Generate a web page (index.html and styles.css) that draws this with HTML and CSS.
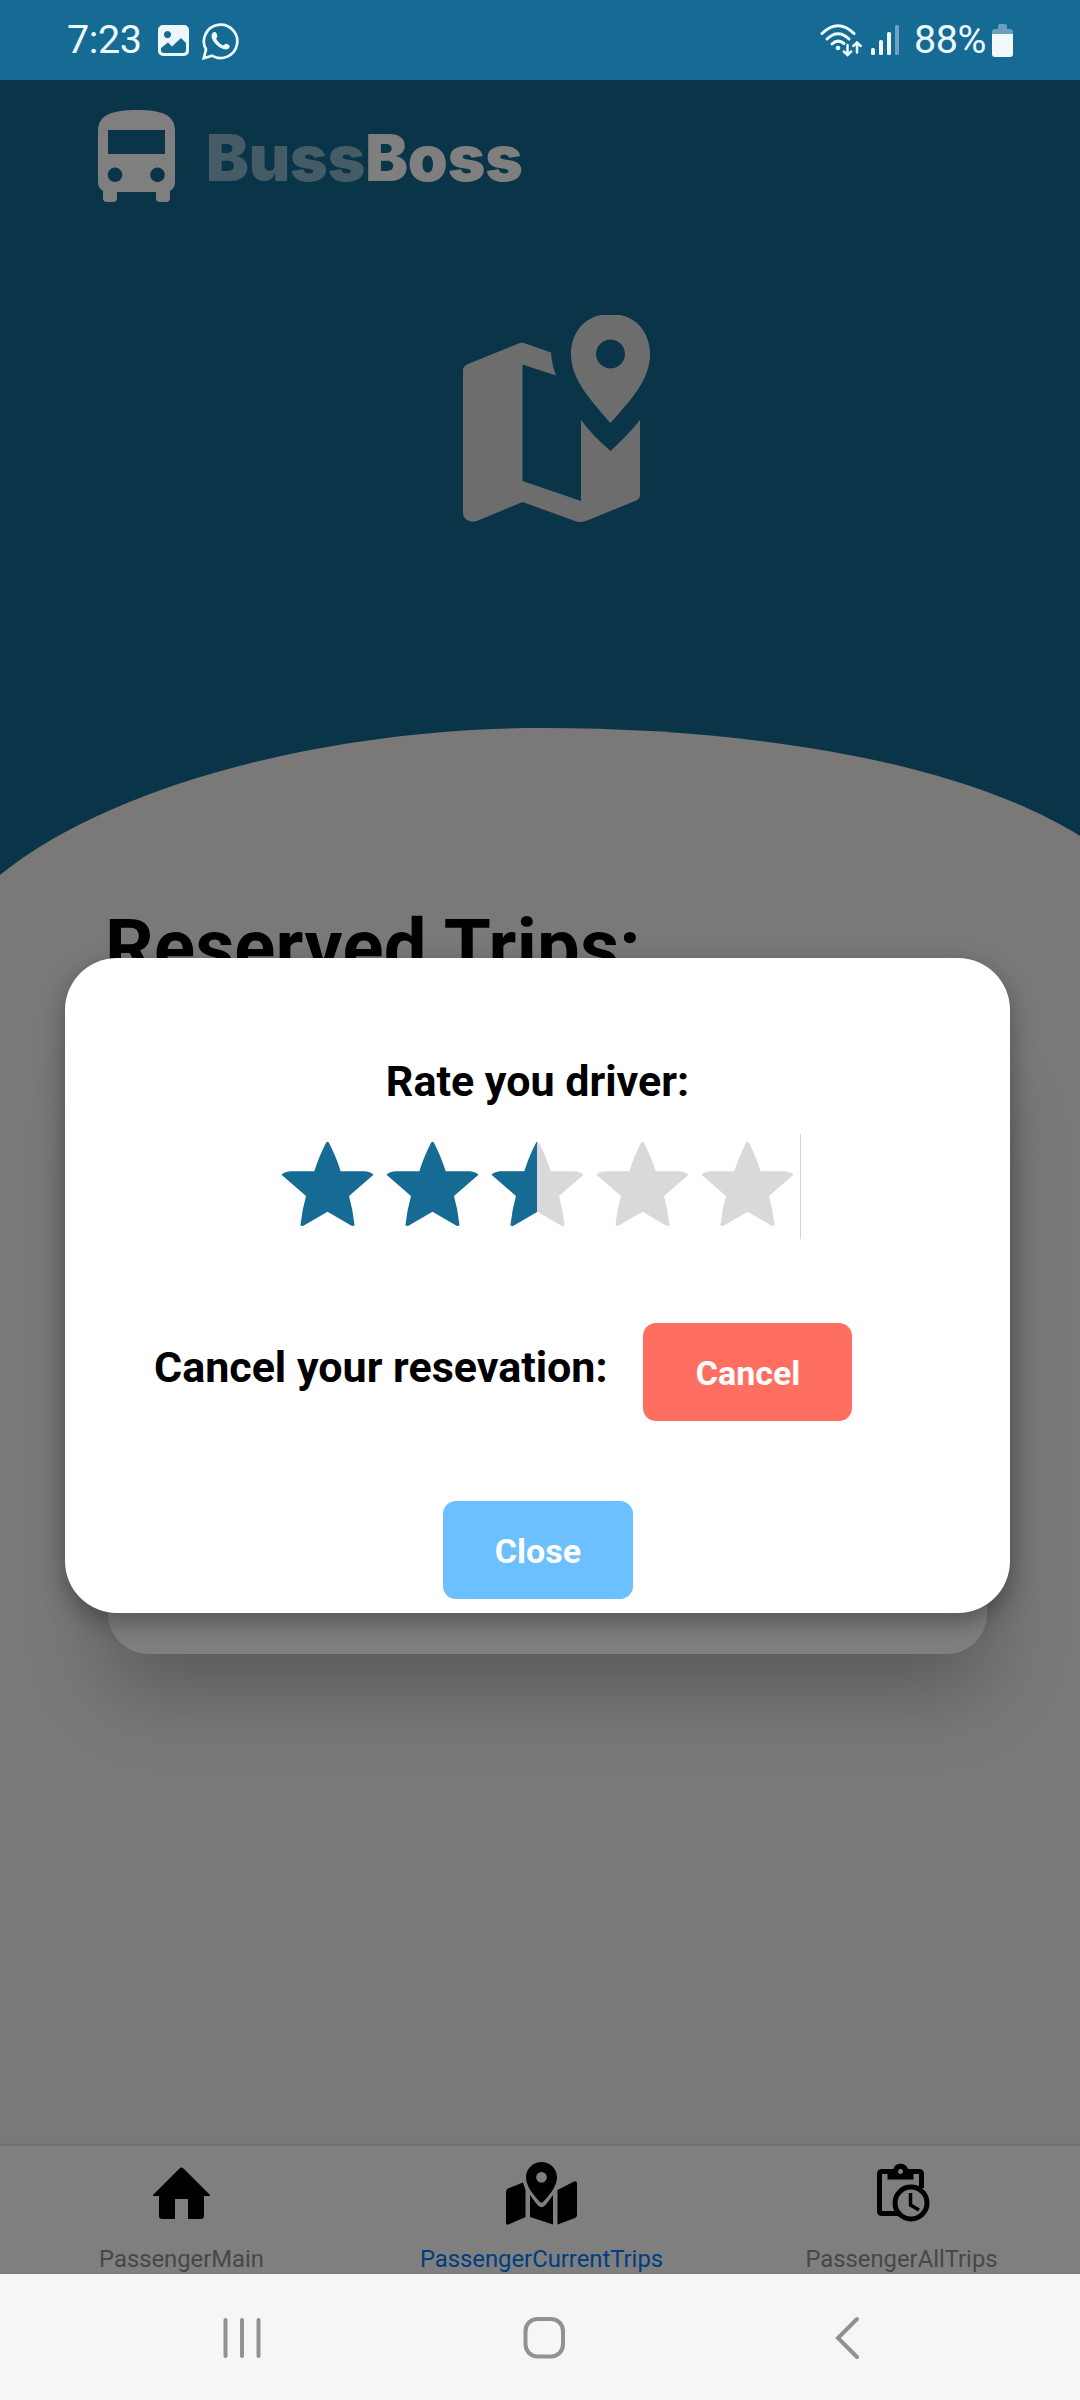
FILE: index.html
```html
<!DOCTYPE html>
<html lang="en">
<head>
<meta charset="utf-8">
<title>BussBoss</title>
<link rel="stylesheet" href="styles.css">
</head>
<body>
<div class="phone">
  <header class="status">
    <span class="status-time">7:23</span>
    <svg class="status-image" width="31" height="31" viewBox="0 0 31 31">
      <path fill="#edf6fa" fill-rule="evenodd" d="M5 0H26a5 5 0 0 1 5 5V26a5 5 0 0 1-5 5H5a5 5 0 0 1-5-5V5a5 5 0 0 1 5-5ZM9.500 6a3.600 3.600 0 1 0 .01 0ZM3 23V25a3 3 0 0 0 3 3H25a3 3 0 0 0 3-3V18L23 13L14 21.500L10 17.500Z"/>
    </svg>
    <svg class="status-chat" width="37" height="38" viewBox="0 0 37 38">
      <path fill="none" stroke="#edf9ff" stroke-width="2.700" d="M1.800 36.200L4 27.500A16.700 16.700 0 1 1 10 33.700Z"/>
      <path fill="#edf9ff" d="M10.500 11C12 9.500 14 9.800 14.500 11.500L15.300 14C15.500 15.500 14 16 14.300 17C16 20 18 22 21 23.300C22 23.500 23 21.500 24.500 21.800L27 23C28.500 24 27.500 26 26 27C20 29.500 9 20 9.500 13.500Z"/>
    </svg>
    <span class="status-gap"></span>
    <svg class="status-wifi" width="42" height="34" viewBox="0 0 42 34">
      <g fill="none" stroke="#edf9ff" stroke-width="3" stroke-linecap="round">
        <path d="M2 10.500Q18 -5 34 10.500"/>
        <path d="M7 16Q18 5.500 29 16"/>
        <path d="M12 21Q18 15.500 24 20.500"/>
        <path d="M27.500 22V31.500M23.800 28.500L27.500 32L31.200 28.500M37 29.500V20M33.300 23L37 19.500L40.700 23" stroke-width="2.500"/>
      </g>
      <circle cx="18" cy="25" r="2.300" fill="#edf9ff"/>
    </svg>
    <svg class="status-signal" width="28" height="31" viewBox="0 0 28 31">
      <g fill="#edf9ff">
        <rect x="0" y="23" width="4" height="7" rx="1.500"/>
        <rect x="8" y="15" width="4" height="15" rx="1.500"/>
        <rect x="16" y="7" width="4" height="23" rx="1.500"/>
        <rect x="24" y="0" width="4" height="30" rx="1.500" opacity=".4"/>
      </g>
    </svg>
    <span class="status-battery">88%</span>
    <svg class="status-cell" width="22" height="33" viewBox="0 0 22 33">
      <path fill="#6aa0bb" d="M6 2a2 2 0 0 1 2-2H13a2 2 0 0 1 2 2V5H18a3 3 0 0 1 3 3V11H0V8A3 3 0 0 1 3 5H6Z"/>
      <path fill="#f0f8fb" d="M0 10H21V30a3 3 0 0 1-3 3H3a3 3 0 0 1-3-3Z"/>
    </svg>
  </header>

  <main class="app">
    <section class="hero">
      <svg class="hero-curve" width="1080" height="200" viewBox="0 0 1080 200">
        <path fill="#f5f2ef" d="M0 149C110 59 330 2 541 2C760 2 965 38 1080 110V200H0Z"/>
      </svg>
      <div class="brand">
        <svg width="78" height="94" viewBox="0 0 78 94">
          <path fill="#fff" fill-rule="evenodd" d="M0 21C0 5 14 0 39 0S77 5 77 21V72C77 76 75.500 79 72 81V88a4 4 0 0 1-4 4H62a4 4 0 0 1-4-4V82H19V88a4 4 0 0 1-4 4H9a4 4 0 0 1-4-4V81C1.500 79 0 76 0 72ZM10 20V44H67V20ZM17 57.500a7.300 7.300 0 1 0 .01 0ZM59.500 57.500a7.300 7.300 0 1 0 .01 0Z"/>
        </svg>
        <span class="brand-name"><span class="brand-tint">Buss</span>Boss</span>
      </div>
      <svg class="hero-map" width="190" height="208" viewBox="0 0 190 208">
        <path fill="#dadada" fill-rule="evenodd" d="M0 55Q0 51 5 49L55 28.700Q59 27 63 28.700L88 37.500Q88.500 49 93 60.500L59.500 49.500V166L118 186V105Q129 120 147.500 136Q164 121 177 105V180Q177 184 172 186L124 205.500Q118 208 112 206L59.500 187L15 205.500Q9 208 4 205Q0 202 0 198Z"/>
        <path fill="#dadada" fill-rule="evenodd" d="M138 0H157C175 3.500 187 19 187 39C187 64 169 84 147.500 108C126 83 108 64 108 39C108 19 120 3.500 138 0ZM147.500 24.500a14.500 14.500 0 1 0 .01 0Z"/>
      </svg>
    </section>
    <section class="trips">
      <h1 class="trips-title">Reserved Trips:</h1>
      <div class="trip-card"></div>
    </section>
    <nav class="tabs">
      <div class="tab">
        <svg width="58" height="66" viewBox="0 0 58 66">
          <path d="M0 33L26.500 6.500Q28.500 4.500 30.500 6.500L57 33V34H51V54Q51 57 48 57H35V37H22V57H9Q6 57 6 54V34H0Z"/>
        </svg>
        <span>PassengerMain</span>
      </div>
      <div class="tab tab-active">
        <svg width="72" height="66" viewBox="0 0 72 66">
          <path d="M0 30Q0 27.500 2 26.500L17 20.500Q18.500 25 19.500 28V55L3 62.300Q0 63.500 0 61ZM24 33Q28 39 32 43.500Q35.500 47 39 43.500Q43 39 47 33V62.500L24 55ZM51.500 28L68 19.500Q71 18.500 71 21.500V53Q71 55 69 56L51.500 62.500Z"/>
          <path fill-rule="evenodd" d="M35.500 0C44 0 51 6.500 51 15.500C51 24 43 34 37 40Q35.500 41.500 34 40C28 34 20 24 20 15.500C20 6.500 27 0 35.500 0ZM35.500 10a5.300 5.300 0 1 0 .01 0Z"/>
        </svg>
        <span>PassengerCurrentTrips</span>
      </div>
      <div class="tab">
        <svg class="tab-clock" width="54" height="66" viewBox="0 0 54 66">
          <path fill-rule="evenodd" d="M5 7H16.500C18 0 29 0 31 7H42Q47 7 47 12V26H42V12H36.500V17.500H10.500V12H5V49H21V54H5Q0 54 0 49V12Q0 7 5 7ZM23.500 7a2.500 2.500 0 1 0 .01 0Z"/>
          <circle cx="34" cy="41" r="16" fill="none" stroke="#000" stroke-width="5"/>
          <path d="M33.500 31V43L42 48" fill="none" stroke="#000" stroke-width="3.500"/>
        </svg>
        <span>PassengerAllTrips</span>
      </div>
    </nav>

    <div class="scrim">
      <div class="modal">
        <h2 class="modal-title">Rate you driver:</h2>
        <div class="stars">
          <svg class="star star-on" viewBox="0 0 105 105"><path d="M51.500 8H53.500Q60.500 21 65.700 37.300H90Q96 38 98.500 40.700L74 62Q78 76 79.600 91.500L77 92L52.500 77.700L28 92L25.400 91.500Q27 76 31 62L6.500 40.700Q9 38 15 37.300H39.300Q44.500 21 51.500 8Z"/></svg>
          <svg class="star star-on" viewBox="0 0 105 105"><path d="M51.500 8H53.500Q60.500 21 65.700 37.300H90Q96 38 98.500 40.700L74 62Q78 76 79.600 91.500L77 92L52.500 77.700L28 92L25.400 91.500Q27 76 31 62L6.500 40.700Q9 38 15 37.300H39.300Q44.500 21 51.500 8Z"/></svg>
          <svg class="star" viewBox="0 0 105 105">
            <path d="M51.500 8H53.500Q60.500 21 65.700 37.300H90Q96 38 98.500 40.700L74 62Q78 76 79.600 91.500L77 92L52.500 77.700L28 92L25.400 91.500Q27 76 31 62L6.500 40.700Q9 38 15 37.300H39.300Q44.500 21 51.500 8Z"/>
            <path fill="#156b93" d="M51.500 8H52V78L28 92L25.400 91.500Q27 76 31 62L6.500 40.700Q9 38 15 37.300H39.300Q44.500 21 51.500 8Z"/>
          </svg>
          <svg class="star" viewBox="0 0 105 105"><path d="M51.500 8H53.500Q60.500 21 65.700 37.300H90Q96 38 98.500 40.700L74 62Q78 76 79.600 91.500L77 92L52.500 77.700L28 92L25.400 91.500Q27 76 31 62L6.500 40.700Q9 38 15 37.300H39.300Q44.500 21 51.500 8Z"/></svg>
          <svg class="star" viewBox="0 0 105 105"><path d="M51.500 8H53.500Q60.500 21 65.700 37.300H90Q96 38 98.500 40.700L74 62Q78 76 79.600 91.500L77 92L52.500 77.700L28 92L25.400 91.500Q27 76 31 62L6.500 40.700Q9 38 15 37.300H39.300Q44.500 21 51.500 8Z"/></svg>
        </div>
        <div class="cancel-row">
          <span class="cancel-label">Cancel your resevation:</span>
          <button class="button button-cancel">Cancel</button>
        </div>
        <button class="button button-close">Close</button>
      </div>
    </div>
  </main>

  <footer class="system-nav">
    <svg width="1080" height="126" viewBox="0 0 1080 126">
      <g fill="none" stroke="#919191" stroke-width="4" stroke-linecap="round">
        <path d="M225.500 46V82M242 46V82M258.500 46V82"/>
        <rect x="525.500" y="45" width="37.500" height="37.500" rx="12"/>
        <path d="M857 45L838 64L857 83"/>
      </g>
    </svg>
  </footer>
</div>
</body>
</html>
```

FILE: styles.css
```css
* { box-sizing: border-box; }

body {
  margin: 0;
  font-family: Roboto, "Liberation Sans", sans-serif;
}

svg { display: block; flex: none; }

.phone {
  display: flex;
  flex-direction: column;
  width: 1080px;
  height: 2400px;
  overflow: hidden;
}

/* Android status bar */
.status {
  display: flex;
  align-items: center;
  flex: none;
  height: 80px;
  padding: 0 67px;
  background: #156b93;
  color: #edf9ff;
  font-size: 39.5px;
  line-height: 46px;
}
.status-time { width: 91px; white-space: nowrap; letter-spacing: -0.4px; }
.status-image { margin-top: 1px; }
.status-chat { margin: 2px 0 0 13px; }
.status-gap { flex: 1; }
.status-wifi { margin-top: -1px; }
.status-signal { margin-left: 9px; }
.status-battery { margin-left: 15px; white-space: nowrap; width: 78px; letter-spacing: -0.4px; }
.status-cell { margin-right: -1px; }

/* Screen behind the dialog */
.app {
  position: relative;
  display: flex;
  flex-direction: column;
  height: 2194px;
  background: #f2f2f2;
  overflow: hidden;
}
.hero {
  position: relative;
  display: flex;
  flex-direction: column;
  height: 820px;
  background: linear-gradient(#156b93 800px, #f2f2f2 800px);
}
.hero-curve { position: absolute; left: 0; bottom: -26px; }
.brand {
  display: flex;
  align-items: flex-start;
  padding: 30px 0 0 98px;
}
.brand-name {
  margin: 9px 0 0 30px;
  color: #fff;
  font: 900 64px/78px Inter, sans-serif;
  letter-spacing: -0.1px;
}
.brand-tint { color: #8ab6cc; }
.hero-map { margin: 111px 0 0 462.5px; }

.trips {
  position: relative;
  flex: 1;
  padding: 0 93px 0 108px;
}
.trips-title {
  margin: 0 0 0 -3px;
  padding-top: 2px;
  font-size: 76px;
  line-height: 90px;
  letter-spacing: 0.2px;
  white-space: nowrap;
}
.trip-card {
  height: 604px;
  margin-top: 58px;
  border-radius: 40px;
  background: #fff;
  box-shadow: 0 36px 80px rgba(0, 0, 0, .26);
}

.tabs {
  display: grid;
  grid-template-columns: repeat(3, 1fr);
  height: 130px;
  border-top: 2px solid #e4e4e4;
  background: #fff;
  box-shadow: 0 -3px 8px rgba(0, 0, 0, .03);
}
.tab {
  display: flex;
  flex-direction: column;
  align-items: center;
  padding: 16px 0 0 3px;
  color: #8e8e8f;
  font-size: 23.8px;
  line-height: 28px;
}
.tab span { margin-top: 17px; }
.tab-active { color: #007aff; }
.tab-clock { margin-left: 4px; }

/* Rating dialog */
.scrim {
  position: absolute;
  inset: 0;
  padding: 878px 70px 0 65px;
  background: rgba(0, 0, 0, .5);
}
.modal {
  display: flex;
  flex-direction: column;
  align-items: center;
  height: 655px;
  padding-top: 98px;
  border-radius: 52px;
  background: #fff;
  box-shadow: 0 9px 26px rgba(0, 0, 0, .34);
}
.modal-title {
  margin: 0;
  font-size: 43px;
  line-height: 50px;
}
.stars {
  display: flex;
  margin-top: 28px;
  border-right: 1px solid #d4d4d4;
}
.star { width: 105px; height: 105px; fill: #d9d9d9; }
.star-on { fill: #156b93; }
.cancel-row {
  display: flex;
  align-items: flex-start;
  justify-content: space-between;
  align-self: stretch;
  padding: 0 158px 0 89px;
  margin-top: 84px;
}
.cancel-label {
  margin-top: 19px;
  font-size: 43px;
  font-weight: 700;
  line-height: 50px;
  white-space: nowrap;
}
.button {
  height: 98px;
  padding: 2px 0 0 1px;
  border: 0;
  border-radius: 13px;
  color: #fff;
  font: 700 34px/96px Roboto, sans-serif;
}
.button-cancel { width: 209px; background: #ff6f61; }
.button-close { width: 190px; margin-top: 80px; background: #6cc0ff; }

.system-nav { height: 126px; flex: none; background: #f6f6f6; }
```
